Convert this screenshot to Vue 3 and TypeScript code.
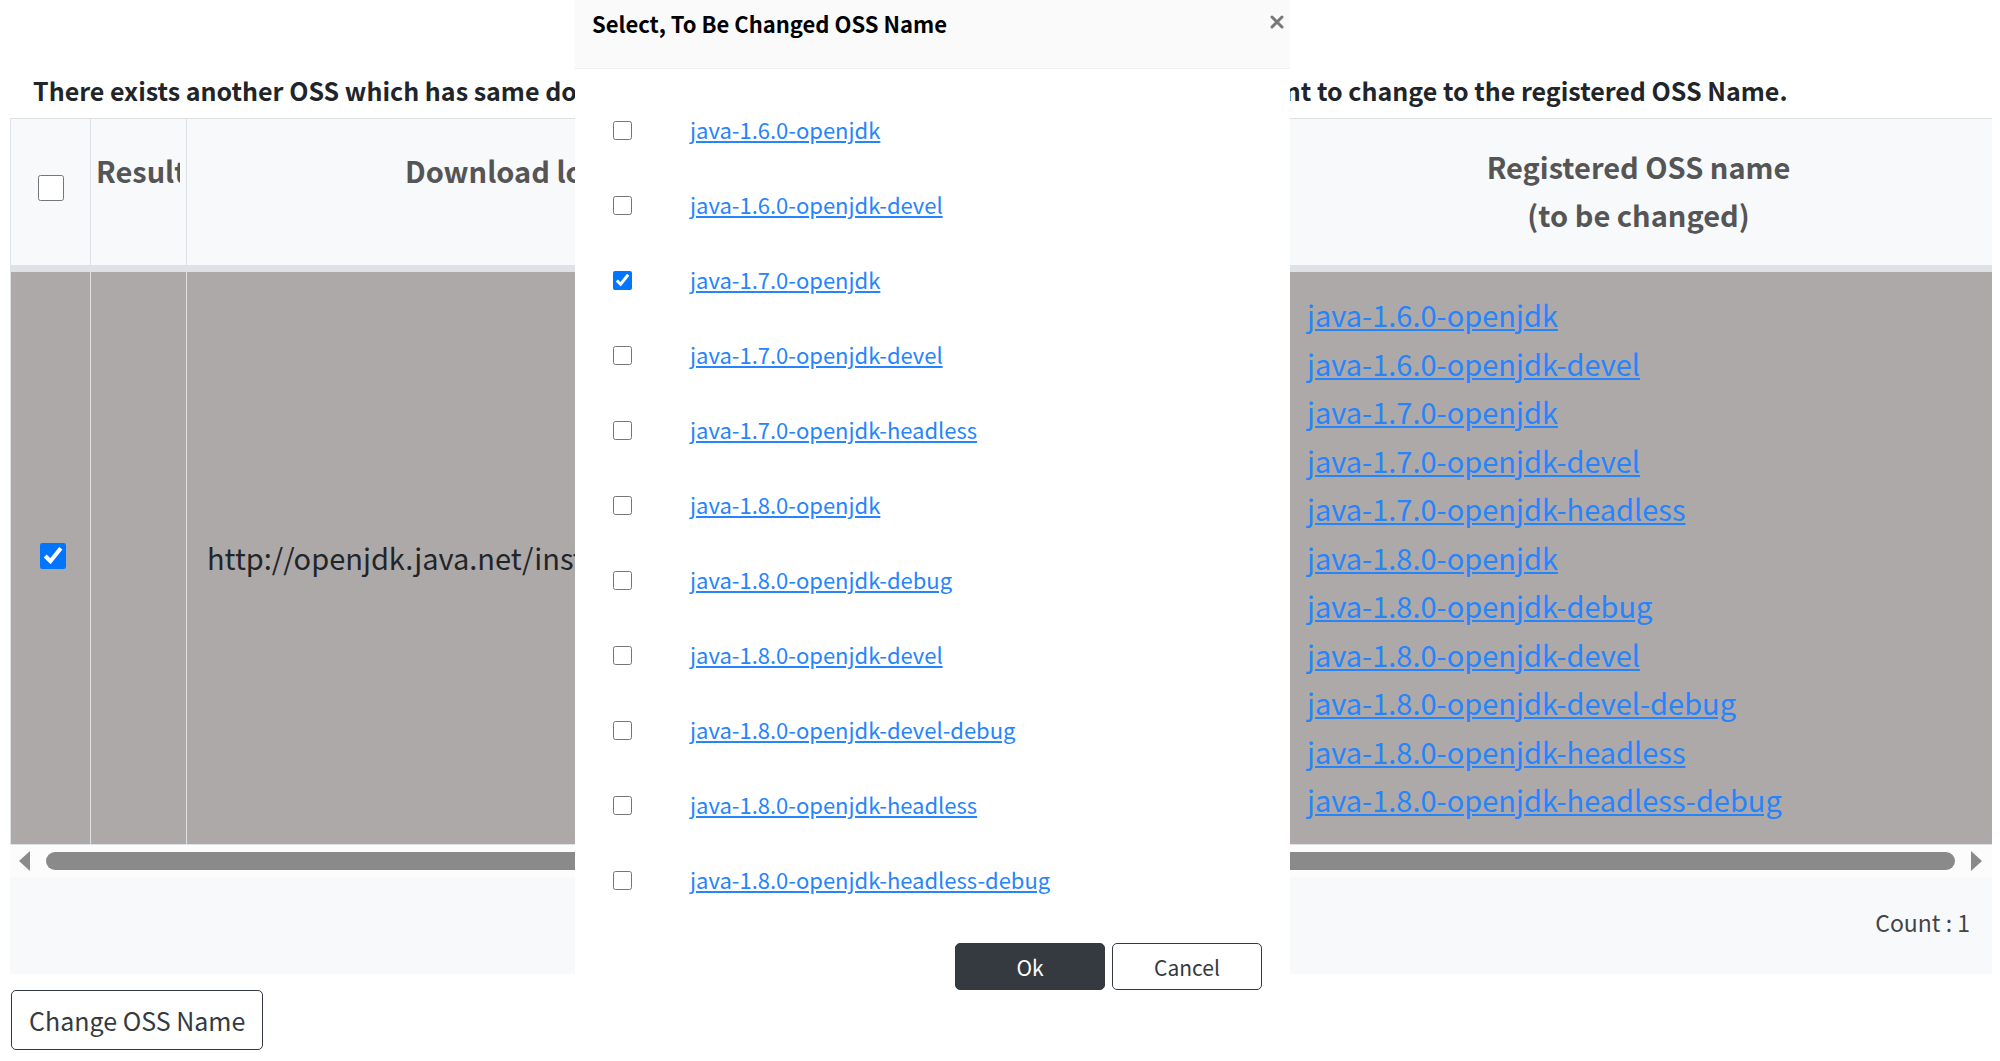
<script setup lang="ts">
import { computed, ref } from 'vue'

const names: string[] = [
  'java-1.6.0-openjdk',
  'java-1.6.0-openjdk-devel',
  'java-1.7.0-openjdk',
  'java-1.7.0-openjdk-devel',
  'java-1.7.0-openjdk-headless',
  'java-1.8.0-openjdk',
  'java-1.8.0-openjdk-debug',
  'java-1.8.0-openjdk-devel',
  'java-1.8.0-openjdk-devel-debug',
  'java-1.8.0-openjdk-headless',
  'java-1.8.0-openjdk-headless-debug',
]

const picked = ref<string[]>(['java-1.7.0-openjdk'])
const allSelected = ref(false)
const rows = ref([{ url: 'http://openjdk.java.net/install/', ossName: 'openjdk', selected: true }])
const count = computed(() => rows.value.length)
</script>

<template>
  <div class="page">
    <main>
      <h1 class="notice">
        There exists another OSS which has same download location. Please select the OSS in the list if you want to change to the registered OSS Name.
      </h1>

      <div class="grid">
        <table>
          <colgroup>
            <col class="col-check" />
            <col class="col-result" />
            <col class="col-url" />
            <col class="col-name" />
            <col />
          </colgroup>
          <thead>
            <tr>
              <th class="check"><input v-model="allSelected" type="checkbox" aria-label="Select all rows" /></th>
              <th class="top"><div class="clip">Result</div></th>
              <th class="top">Download location</th>
              <th class="top">OSS name</th>
              <th class="last">Registered OSS name<br />(to be changed)</th>
            </tr>
          </thead>
          <tbody>
            <tr v-for="row in rows" :key="row.url">
              <td class="check"><input v-model="row.selected" type="checkbox" aria-label="Select row" /></td>
              <td></td>
              <td class="url">{{ row.url }}</td>
              <td class="name">{{ row.ossName }}</td>
              <td class="last">
                <ul class="registered">
                  <li v-for="name in names" :key="name"><a href="#">{{ name }}</a></li>
                </ul>
              </td>
            </tr>
          </tbody>
        </table>
        <div class="scrollbar">
          <svg width="11" height="20" viewBox="0 0 11 20" aria-hidden="true"><path d="M11 0v20L0 10z" fill="#8a8a8a" /></svg>
          <div class="thumb"></div>
          <svg width="11" height="20" viewBox="0 0 11 20" aria-hidden="true"><path d="M0 0v20l11-10z" fill="#8a8a8a" /></svg>
        </div>
        <div class="pager">Count : {{ count }}</div>
      </div>

      <button type="button" class="change">Change OSS Name</button>
    </main>

    <section class="dialog" role="dialog" aria-labelledby="dialog-title">
      <header>
        <h2 id="dialog-title">Select, To Be Changed OSS Name</h2>
        <button type="button" class="close" aria-label="Close">
          <svg width="14" height="14" viewBox="0 0 14 14"><path d="M2 2l10 10M12 2L2 12" stroke="#777" stroke-width="3" stroke-linecap="round" /></svg>
        </button>
      </header>
      <ul class="choices">
        <li v-for="name in names" :key="name">
          <input v-model="picked" type="checkbox" :value="name" :aria-label="name" />
          <a href="#">{{ name }}</a>
        </li>
      </ul>
      <footer>
        <button type="button" class="ok">Ok</button>
        <button type="button">Cancel</button>
      </footer>
    </section>
  </div>
</template>

<style>
body {
  margin: 0;
  background: #fff;
}
</style>

<style scoped>
.page {
  position: relative;
  box-sizing: border-box;
  min-height: 100vh;
  overflow: hidden;
  padding: 67px 8px 10px 10px;
  font-family: "Noto Sans CJK KR", sans-serif;
  color: #212529;
}

input {
  margin: 0;
}

a {
  color: #2684fc;
  text-decoration: underline;
}

ul {
  margin: 0;
  padding: 0;
  list-style: none;
}

button {
  box-sizing: border-box;
  border: 1px solid #343a40;
  border-radius: 5px;
  background: #fff;
  color: #343a40;
  font-family: inherit;
}

.notice {
  margin: 0;
  padding: 3px 23px 8px;
  font-size: 25px;
  line-height: 40px;
  font-weight: 700;
  white-space: nowrap;
}

.grid {
  background: #f8f9fb;
}

table {
  width: 100%;
  table-layout: fixed;
  border-collapse: separate;
  border-spacing: 0;
  border-top: 1px solid #dee2e6;
  border-left: 1px solid #dee2e6;
  font-size: 29px;
  line-height: 48px;
}

.col-check { width: 80px; }
.col-result { width: 96px; }
.col-url { width: 706px; }
.col-name { width: 392px; }

th,
td {
  padding: 0 4px;
  border-right: 1px solid #dee2e6;
}

th {
  box-sizing: border-box;
  height: 153px;
  border-bottom: 7px solid #dee2e6;
  color: #555;
  font-weight: 700;
}

th.top {
  padding: 27px 6px 0 5px;
  vertical-align: top;
}

th.last,
td.last {
  border-right: 0;
}

th.last {
  padding-bottom: 5px;
}

td {
  background: #ada9a8;
  border-bottom: 1px solid #dee2e6;
}

td.last {
  padding: 18px 22px 21px;
}

td.url {
  padding: 0 20px 2px;
}

td.name {
  text-align: center;
}

.clip {
  overflow: hidden;
}

.check input {
  display: block;
  width: 26px;
  height: 26px;
  margin: 0 auto;
}

th.check {
  padding-bottom: 9px;
}

td.check {
  padding: 0 4px 4px 8px;
}

.registered {
  display: flex;
  flex-direction: column;
  justify-content: space-between;
  min-height: 533px;
}

.scrollbar {
  display: flex;
  align-items: center;
  gap: 16px;
  height: 32px;
  padding: 0 10px 0 9px;
  background: #fcfcfc;
}

.thumb {
  flex: 1;
  height: 18px;
  border-radius: 9px;
  background: #8a8a8a;
}

.pager {
  padding: 21px 22px 28px;
  color: #444;
  font-size: 23px;
  line-height: 48px;
  text-align: right;
}

.change {
  margin: 16px 0 0 1px;
  padding: 0 17px;
  font-size: 25px;
  line-height: 58px;
}

.dialog {
  position: absolute;
  top: 0;
  bottom: 0;
  left: 575px;
  width: 715px;
  background: #fff;
}

.dialog header {
  display: flex;
  align-items: flex-start;
  justify-content: space-between;
  box-sizing: border-box;
  height: 69px;
  padding: 3px 6px 0 17px;
  border-bottom: 1px solid #eee;
  background: #fafafa;
}

.dialog h2 {
  margin: 0;
  color: #000;
  font-size: 22px;
  line-height: 40px;
  font-weight: 700;
}

.close {
  display: flex;
  padding: 12px 0;
  border: 0;
  background: none;
}

.choices {
  padding-top: 24px;
}

.choices li {
  display: flex;
  align-items: center;
  gap: 58px;
  height: 75px;
  padding-left: 38px;
  font-size: 22px;
}

.choices a {
  padding-bottom: 3px;
}

.choices input {
  width: 19px;
  height: 19px;
}

.dialog footer {
  display: flex;
  justify-content: flex-end;
  gap: 7px;
  padding: 25px 28px 0;
}

.dialog footer button {
  width: 150px;
  height: 47px;
  font-size: 21px;
}

.dialog footer .ok {
  background: #343a40;
  color: #fff;
}
</style>
